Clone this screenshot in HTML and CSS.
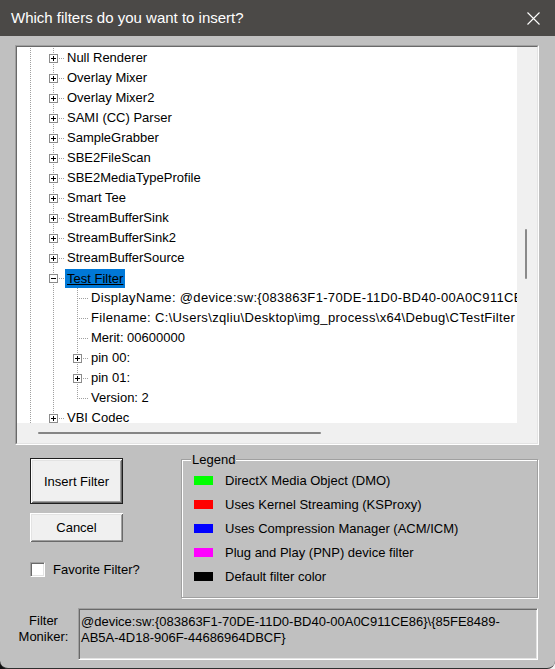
FILE: index.html
```html
<!DOCTYPE html>
<html>
<head>
<meta charset="utf-8">
<link rel="stylesheet" href="styles.css">
</head>
<body>
<div class="window">
  <div class="titlebar">
    <span class="title">Which filters do you want to insert?</span>
    <svg class="close" width="13" height="13" viewBox="0 0 13 13"><path d="M0.5 0.5 L12.5 12.5 M12.5 0.5 L0.5 12.5" stroke="#ffffff" stroke-width="1.1" fill="none"/></svg>
  </div>
  <div class="client">
    <div class="treebox">
      <div class="treeinner">
        <div class="tree">
          <div class="row"><span class="g g0 v"></span><span class="g v h"><i class="box plus"></i></span><span class="lbl">Null Renderer</span></div>
          <div class="row"><span class="g g0 v"></span><span class="g v h"><i class="box plus"></i></span><span class="lbl">Overlay Mixer</span></div>
          <div class="row"><span class="g g0 v"></span><span class="g v h"><i class="box plus"></i></span><span class="lbl">Overlay Mixer2</span></div>
          <div class="row"><span class="g g0 v"></span><span class="g v h"><i class="box plus"></i></span><span class="lbl">SAMI (CC) Parser</span></div>
          <div class="row"><span class="g g0 v"></span><span class="g v h"><i class="box plus"></i></span><span class="lbl">SampleGrabber</span></div>
          <div class="row"><span class="g g0 v"></span><span class="g v h"><i class="box plus"></i></span><span class="lbl">SBE2FileScan</span></div>
          <div class="row"><span class="g g0 v"></span><span class="g v h"><i class="box plus"></i></span><span class="lbl">SBE2MediaTypeProfile</span></div>
          <div class="row"><span class="g g0 v"></span><span class="g v h"><i class="box plus"></i></span><span class="lbl">Smart Tee</span></div>
          <div class="row"><span class="g g0 v"></span><span class="g v h"><i class="box plus"></i></span><span class="lbl">StreamBufferSink</span></div>
          <div class="row"><span class="g g0 v"></span><span class="g v h"><i class="box plus"></i></span><span class="lbl">StreamBufferSink2</span></div>
          <div class="row"><span class="g g0 v"></span><span class="g v h"><i class="box plus"></i></span><span class="lbl">StreamBufferSource</span></div>
          <div class="row"><span class="g g0 v"></span><span class="g v h"><i class="box minus"></i></span><span class="lbl sel">Test Filter</span></div>
          <div class="row"><span class="g g0 v"></span><span class="g v"></span><span class="g v h"></span><span class="lbl long">DisplayName: @device:sw:{083863F1-70DE-11D0-BD40-00A0C911CE86}\{85FE8489-AB5A-4D18-906F-44686964DBCF}</span></div>
          <div class="row"><span class="g g0 v"></span><span class="g v"></span><span class="g v h"></span><span class="lbl long">Filename: C:\Users\zqliu\Desktop\img_process\x64\Debug\CTestFilter</span></div>
          <div class="row"><span class="g g0 v"></span><span class="g v"></span><span class="g v h"></span><span class="lbl">Merit: 00600000</span></div>
          <div class="row"><span class="g g0 v"></span><span class="g v"></span><span class="g v h"><i class="box plus"></i></span><span class="lbl">pin 00:</span></div>
          <div class="row"><span class="g g0 v"></span><span class="g v"></span><span class="g v h"><i class="box plus"></i></span><span class="lbl">pin 01:</span></div>
          <div class="row"><span class="g g0 v"></span><span class="g v"></span><span class="g half h"></span><span class="lbl">Version: 2</span></div>
          <div class="row"><span class="g g0 v"></span><span class="g v h"><i class="box plus"></i></span><span class="lbl">VBI Codec</span></div>
        </div>
        <div class="vscroll"><div class="vthumb"></div></div>
        <div class="hscroll"><div class="hthumb"></div></div>
        <div class="corner"></div>
      </div>
    </div>

    <div class="lower">
      <div class="actions">
        <button class="btn btn-default">Insert Filter</button>
        <button class="btn btn-cancel">Cancel</button>
        <label class="check"><span class="checkbox"></span><span>Favorite Filter?</span></label>
      </div>
      <fieldset class="group">
        <legend>Legend</legend>
        <div class="item"><span class="swatch green"></span><span>DirectX Media Object (DMO)</span></div>
        <div class="item"><span class="swatch red"></span><span>Uses Kernel Streaming (KSProxy)</span></div>
        <div class="item"><span class="swatch blue"></span><span>Uses Compression Manager (ACM/ICM)</span></div>
        <div class="item"><span class="swatch magenta"></span><span>Plug and Play (PNP) device filter</span></div>
        <div class="item"><span class="swatch black"></span><span>Default filter color</span></div>
      </fieldset>
    </div>

    <div class="moniker-row">
      <div class="moniker-label">Filter<br>Moniker:</div>
      <div class="moniker-box">@device:sw:{083863F1-70DE-11D0-BD40-00A0C911CE86}\{85FE8489-<br>AB5A-4D18-906F-44686964DBCF}</div>
    </div>
  </div>
</div>
</body>
</html>
```
FILE: styles.css
```css
* { box-sizing: border-box; }

html {
  background: linear-gradient(to right, #111111 0 318px, #f2f2f2 318px);
}

body {
  margin: 0;
  font-family: "Liberation Sans", Arial, sans-serif;
  font-size: 13px;
  color: #000;
}

.window {
  width: 555px;
  height: 669px;
  background: #c0c0c0;
  border-radius: 0 0 8px 8px;
  border-bottom: 1px solid #2e2e2e;
  display: flex;
  flex-direction: column;
  overflow: hidden;
}

.titlebar {
  height: 36px;
  flex: none;
  background: #4b4947;
  display: flex;
  align-items: center;
  padding-left: 11px;
}

.title {
  color: #ffffff;
  font-size: 15px;
  line-height: 18px;
}

.close {
  margin-left: auto;
  margin-right: 15px;
  display: block;
}

.client {
  flex: 1;
  display: flex;
  flex-direction: column;
  padding: 9px 16px 0 15px;
}

/* ---------- tree view ---------- */
.treebox {
  height: 400px;
  flex: none;
  border: 1px solid;
  border-color: #a0a0a0 #ffffff #ffffff #a0a0a0;
}

.treeinner {
  height: 100%;
  border: 1px solid;
  border-color: #696969 #e3e3e3 #e3e3e3 #696969;
  display: grid;
  grid-template-columns: 1fr 20px;
  grid-template-rows: 1fr 20px;
}

.tree {
  background: #ffffff;
  overflow: hidden;
  padding: 1px 0 0 1px;
}

.row {
  display: flex;
  height: 20px;
  white-space: nowrap;
}

.g {
  position: relative;
  flex: none;
  width: 24px;
  height: 20px;
}

.g0 { width: 23px; }

.v::before,
.half::before {
  content: "";
  position: absolute;
  left: 12px;
  top: 0;
  bottom: 0;
  width: 1px;
  background: repeating-linear-gradient(to bottom, #a0a0a0 0 1px, transparent 1px 2px);
}

.half::before { bottom: 10px; }

.h::after {
  content: "";
  position: absolute;
  left: 12px;
  right: 0;
  top: 10px;
  height: 1px;
  background: repeating-linear-gradient(to right, #a0a0a0 0 1px, transparent 1px 2px);
}

.box {
  position: absolute;
  z-index: 1;
  left: 8px;
  top: 6px;
  width: 9px;
  height: 9px;
  border: 1px solid #8c8c8c;
  background: #ffffff;
}

.plus {
  background:
    linear-gradient(#000, #000) center / 5px 1px no-repeat,
    linear-gradient(#000, #000) center / 1px 5px no-repeat,
    #ffffff;
}

.minus {
  background:
    linear-gradient(#000, #000) center / 5px 1px no-repeat,
    #ffffff;
}

.lbl {
  padding: 0 2px;
  line-height: 20px;
  color: #000;
}

.lbl.long { letter-spacing: 0.33px; }

.lbl.sel {
  background: #0078d7;
  height: 19px;
  line-height: 19px;
  margin-top: 1px;
  text-decoration: underline;
  padding: 0 2px 0 2px;
}

.vscroll {
  background: #f0f0f0;
  padding: 182px 0 0 8px;
}

.vthumb {
  width: 2px;
  height: 50px;
  border-radius: 1px;
  background: #8a8a8a;
}

.hscroll {
  background: #f0f0f0;
  padding: 9px 0 0 21px;
}

.hthumb {
  width: 283px;
  height: 2px;
  border-radius: 1px;
  background: #858585;
}

.corner { background: #f0f0f0; }

/* ---------- lower section ---------- */
.lower {
  display: flex;
  align-items: flex-start;
  margin-top: 7px;
}

.actions {
  width: 93px;
  margin-left: 15px;
  padding-top: 6px;
  display: flex;
  flex-direction: column;
}

.btn {
  font-family: "Liberation Sans", Arial, sans-serif;
  font-size: 13px;
  color: #000;
  background: #f0f0f0;
  width: 93px;
  padding: 0;
  margin: 0;
  border: none;
  box-shadow:
    inset 1px 1px 0 #ffffff,
    inset -1px -1px 0 #696969,
    inset 2px 2px 0 #e3e3e3,
    inset -2px -2px 0 #a0a0a0;
}

.btn-default {
  height: 46px;
  border: 1px solid #1e1e1e;
}

.btn-cancel {
  height: 29px;
  margin-top: 9px;
}

.check {
  display: flex;
  align-items: center;
  margin-top: 20px;
  height: 15px;
  white-space: nowrap;
}

.checkbox {
  width: 15px;
  height: 15px;
  flex: none;
  background: #ffffff;
  border: 1px solid;
  border-color: #a0a0a0 #ffffff #ffffff #a0a0a0;
  box-shadow: inset 1px 1px 0 #696969, inset -1px -1px 0 #e3e3e3;
  margin-right: 8px;
}

.group {
  margin: 0 0 0 58px;
  padding: 1px 0 9px 0;
  width: 357px;
  min-width: 0;
  border: 1px solid #a0a0a0;
  box-shadow: inset 1px 1px 0 #ffffff, 1px 1px 0 #ffffff;
}

.group legend {
  margin-left: 9px;
  padding: 0 1px;
  line-height: 15px;
  background: #c0c0c0;
}

.item {
  display: flex;
  align-items: center;
  height: 24px;
  padding-left: 12px;
  white-space: nowrap;
}

.swatch {
  width: 19px;
  height: 9px;
  flex: none;
  margin-right: 12px;
}

.green { background: #00ff00; }
.red { background: #ff0000; }
.blue { background: #0000ff; }
.magenta { background: #ff00ff; }
.black { background: #000000; }

/* ---------- moniker ---------- */
.moniker-row {
  display: flex;
  margin-top: 10px;
}

.moniker-label {
  width: 57px;
  text-align: center;
  padding-top: 5px;
  line-height: 16px;
}

.moniker-box {
  margin-left: 6px;
  width: 460px;
  height: 52px;
  border: 1px solid;
  border-color: #a0a0a0 #ffffff #ffffff #a0a0a0;
  box-shadow: inset 1px 1px 0 #696969, inset -1px -1px 0 #e3e3e3;
  padding: 5px 0 0 2px;
  line-height: 16px;
  white-space: nowrap;
}
```
